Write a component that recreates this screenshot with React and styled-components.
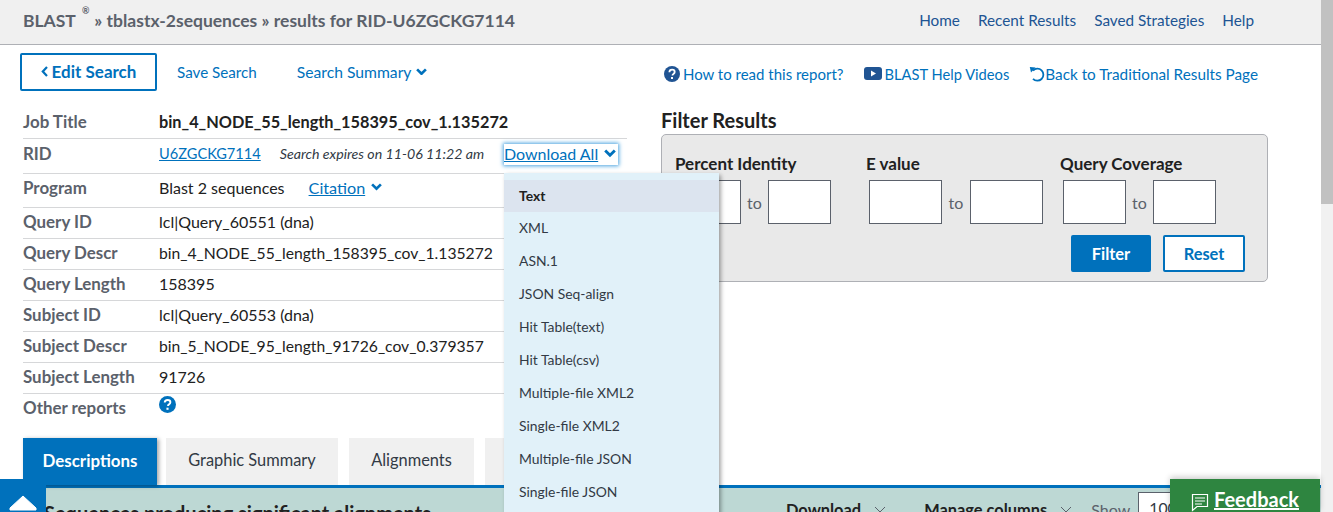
import React from "react";
import styled, { createGlobalStyle } from "styled-components";

const Global = createGlobalStyle`
  html, body { margin: 0; padding: 0; height: 512px; overflow: hidden; background: #fff; }
  body { font-family: Lato, "Open Sans", sans-serif; font-size: 16px; color: #212121; }
  a { color: #0071bc; text-decoration: none; }
`;

const Shell = styled.div`display: flex; width: 1333px; height: 512px; overflow: hidden; position: relative;`;
const Main = styled.div`width: 1321px; flex: none;`;
const ScrollTrack = styled.div`width: 12px; flex: none; background: #f1f1f1;`;
const ScrollThumb = styled.div`height: 204px; background: #c1c1c1;`;

const Header = styled.header`
  height: 45px; box-sizing: border-box; background: #f0f0f0; border-bottom: 1px solid #aeb0b5;
  display: flex; justify-content: space-between; align-items: center;
  padding: 0 67px 4px 23px;
`;
const Crumbs = styled.div`font-size: 17.5px; font-weight: 700; color: #5b616b; display: flex;`;
const Reg = styled.sup`font-size: 9px; margin: -4px 5px 0 6px; line-height: 1;`;
const TopNav = styled.nav`display: flex; gap: 18px; font-size: 15.3px; a { color: #205493; }`;

const Toolbar = styled.div`
  display: flex; align-items: center; justify-content: space-between;
  padding: 8px 63px 0 20px; height: 37px;
`;
const ToolLeft = styled.div`display: flex; align-items: center;`;
const ToolRight = styled.div`display: flex; align-items: center; gap: 20px; padding-top: 4px;`;
const EditBtn = styled.a`
  width: 137px; height: 38px; box-sizing: border-box; border: 2px solid #0071bc; border-radius: 2px;
  display: flex; align-items: center; justify-content: center; gap: 4px;
  font-weight: 700; font-size: 17px; color: #0071bc;
`;
const ToolLink = styled.a`font-size: ${p => p.$fs}px; color: #0071bc; margin-left: ${p => p.$ml}px; display: inline-flex; align-items: center; gap: 5px;`;
const IconLink = styled.a`display: inline-flex; align-items: center; gap: ${p => p.$gap}px; color: #0071bc; font-size: ${p => p.$fs}px;`;

const Columns = styled.div`display: flex; padding: 15px 0 0 23px;`;
const Meta = styled.div`width: 604px; flex: none;`;
const Row = styled.div`
  display: flex; align-items: center; height: ${p => p.$h}px; box-sizing: border-box;
  padding-bottom: ${p => p.$pb || 0}px;
  border-bottom: ${p => (p.$last ? "none" : "1px solid #d6d7d9")};
  font-size: ${p => p.$fs || 16}px;
`;
const Label = styled.div`width: 136px; flex: none; font-weight: 700; color: #5b616b; font-size: 16.9px;`;
const Strong = styled.span`font-weight: 700; font-size: 16.3px;`;
const Under = styled.a`text-decoration: underline; color: #0071bc; font-size: ${p => p.$fs}px;`;
const Expires = styled.em`font-size: 14.2px; color: #323a45; margin-left: 19px;`;
const DownloadAll = styled.span`
  position: absolute; left: 504px; top: 144px; height: 21px; padding: 0 2px 2px 0; width: 114px; box-sizing: border-box;
  display: flex; align-items: center; justify-content: space-between; background: #fff;
  box-shadow: 0 0 4px 1px #4aa3df;
`;
const CitationWrap = styled.span`margin-left: 24px; display: inline-flex; align-items: center; gap: 6px;`;
const ReportsHelp = styled.span`display: flex; margin-top: -7px;`;

const FilterCol = styled.section`margin-left: 34px; width: 607px;`;
const FilterTitle = styled.h2`margin: 3px 0 1px; font-size: 20px; font-weight: 700; line-height: 25px; color: #212121;`;
const FilterBox = styled.div`
  height: 148px; box-sizing: border-box; background: #e9e9e9; border: 1px solid #aeb0b5; border-radius: 5px;
  padding: 19px 22px 0 13px;
`;
const Groups = styled.div`display: flex;`;
const Group = styled.div`width: ${p => p.$w}px; flex: none;`;
const GroupLabel = styled.div`font-weight: 700; font-size: 17px; line-height: 20px; margin-bottom: 6px;`;
const Pair = styled.div`display: flex; align-items: center; padding-left: 3px; color: #5b616b;`;
const To = styled.span`width: ${p => p.$w}px; text-align: center; font-size: 16px; flex: none;`;
const Num = styled.div`width: ${p => p.$w}px; height: 44px; box-sizing: border-box; background: #fff; border: 1px solid #5b616b;`;
const Actions = styled.div`display: flex; justify-content: flex-end; gap: 12px; margin-top: 11px;`;
const Btn = styled.a`
  height: 37px; width: ${p => p.$w}px; box-sizing: border-box; display: flex; align-items: center; justify-content: center;
  font-weight: 700; font-size: 16.4px; border-radius: 2px; border: 2px solid #0071bc;
  background: ${p => (p.$solid ? "#0071bc" : "#fff")}; color: ${p => (p.$solid ? "#fff" : "#0071bc")};
`;

const Tabs = styled.div`display: flex; gap: 11px; padding: 13px 0 0 23px; height: 47px;`;
const Tab = styled.div`
  width: ${p => p.$w}px; height: 47px; box-sizing: border-box; display: flex; align-items: center; justify-content: center;
  margin-left: ${p => p.$ml || 0}px; padding-bottom: ${p => (p.$on ? 2 : 5)}px;
  background: ${p => (p.$on ? "#0071bc" : "#f0f0f0")}; color: ${p => (p.$on ? "#fff" : "#323a45")};
  font-weight: ${p => (p.$on ? 700 : 400)}; font-size: ${p => (p.$on ? 16.9 : 16.4)}px;
  box-shadow: ${p => (p.$on ? "2px 1px 4px rgba(0,0,0,.35)" : "none")};
`;
const Band = styled.div`
  margin-left: 23px; border-top: 3px solid #0071bc; height: 40px; box-sizing: border-box; background: #bdd8d4;
  padding: 14px 0 0 21px; font-weight: 700; color: #212121; font-size: 20px; white-space: nowrap; line-height: 22px;
`;
const BandTools = styled.div`
  position: absolute; left: 786px; top: 498px; display: flex; align-items: center; font-size: 16.4px; font-weight: 700; line-height: 20px;
`;
const BandTool = styled.span`display: inline-flex; align-items: center; gap: 13px; margin-right: ${p => p.$mr}px;`;
const Show = styled.span`font-weight: 400; color: #5b616b; margin-right: 8px; font-size: 16px;`;
const ShowBox = styled.span`width: 60px; height: 30px; margin-top: -6px; box-sizing: border-box; background: #fff; border: 1px solid #5b616b; font-weight: 400; padding: 5px 0 0 10px; color: #323a45; font-size: 15.8px;`;

const Menu = styled.ul`
  position: absolute; left: 504px; top: 173px; width: 215px; height: 345px; margin: 0; padding: 7px 0 0; list-style: none;
  background: #e1f1f9; box-shadow: 2px 2px 4px rgba(0,0,0,.35); font-size: 13.9px; color: #323a45;
`;
const MenuItem = styled.li`
  height: ${p => (p.$on ? 32 : 33)}px; display: flex; align-items: center; padding: 0 0 2px 15px; box-sizing: border-box;
  background: ${p => (p.$on ? "#dce4ef" : "transparent")}; font-weight: ${p => (p.$on ? 700 : 400)};
  color: ${p => (p.$on ? "#212121" : "#323a45")};
`;
const TopBtn = styled.a`
  position: absolute; left: 0; bottom: 0; width: 46px; height: 33px; background: #0071bc;
  display: flex; justify-content: center; align-items: flex-start; padding-top: 16px; box-sizing: border-box;
`;
const Feedback = styled.a`
  position: absolute; left: 1170px; bottom: 0; width: 150px; height: 33px; background: #2e8540; color: #fff;
  display: flex; align-items: flex-start; justify-content: center; gap: 4px; padding-top: 8px; box-sizing: border-box;
  font-weight: 700; font-size: 20px; line-height: 24px; box-shadow: 0 -2px 6px rgba(0,0,0,.2);
  span { text-decoration: underline; }
`;

const Chevron = ({ color = "#0071bc", size = 11 }) => (
  <svg width={size} height={size * 0.7} viewBox="0 0 10 7"><path d="M1 1.2l4 4 4-4" fill="none" stroke={color} strokeWidth="2.4" /></svg>
);
const ThinChevron = () => (
  <svg width="12" height="8" viewBox="0 0 12 8"><path d="M1 1l5 5 5-5" fill="none" stroke="#5b616b" strokeWidth="1" /></svg>
);
const Help = ({ color, size }) => (
  <svg width={size} height={size} viewBox="0 0 16 16">
    <circle cx="8" cy="8" r="8" fill={color} />
    <path d="M5.4 6.2c0-1.6 1.2-2.5 2.7-2.5s2.6.9 2.6 2.2c0 1-.6 1.5-1.3 2-.6.4-.9.7-.9 1.3v.3" fill="none" stroke="#fff" strokeWidth="1.8" />
    <rect x="7" y="11" width="2" height="2" fill="#fff" />
  </svg>
);
const Video = () => (
  <svg width="18" height="13" viewBox="0 0 18 13">
    <rect width="18" height="13" rx="3" fill="#205493" />
    <path d="M7 3.5l5 3-5 3z" fill="#fff" />
  </svg>
);
const Undo = () => (
  <svg width="16" height="16" viewBox="0 0 16 16">
    <path d="M4 4.6A6 6 0 1 1 4 12.8" fill="none" stroke="#0071bc" strokeWidth="1.8" />
    <path d="M.8 1l5.8.6-4.6 5z" fill="#0071bc" />
  </svg>
);
const Comment = () => (
  <svg width="19" height="20" viewBox="0 0 19 20" style={{ marginTop: 6 }}>
    <path d="M1.5 1.5h15v12H6l-4.5 4z" fill="none" stroke="#fff" strokeWidth="1.2" />
    <path d="M4 5h10M4 8h10M4 11h7" stroke="#fff" strokeWidth="1.1" />
  </svg>
);

const rows = [
  ["Query ID", "lcl|Query_60551 (dna)", 16],
  ["Query Descr", "bin_4_NODE_55_length_158395_cov_1.135272", 15.7],
  ["Query Length", "158395", 16],
  ["Subject ID", "lcl|Query_60553 (dna)", 16],
  ["Subject Descr", "bin_5_NODE_95_length_91726_cov_0.379357", 15.7],
  ["Subject Length", "91726", 16],
];
const items = ["Text", "XML", "ASN.1", "JSON Seq-align", "Hit Table(text)", "Hit Table(csv)", "Multiple-file XML2", "Single-file XML2", "Multiple-file JSON", "Single-file JSON", "Search Summary"];

export default function App() {
  return (
    <Shell>
      <Global />
      <Main>
        <Header>
          <Crumbs>BLAST<Reg>®</Reg>» tblastx-2sequences » results for RID-U6ZGCKG7114</Crumbs>
          <TopNav><a>Home</a><a>Recent Results</a><a>Saved Strategies</a><a>Help</a></TopNav>
        </Header>
        <Toolbar>
          <ToolLeft>
            <EditBtn>
              <svg width="7" height="11" viewBox="0 0 7 11"><path d="M6 1L1.8 5.5 6 10" fill="none" stroke="#0071bc" strokeWidth="2.2" /></svg>
              Edit Search
            </EditBtn>
            <ToolLink $ml={20} $fs={15.2}>Save Search</ToolLink>
            <ToolLink $ml={40} $fs={15.7}>Search Summary <Chevron /></ToolLink>
          </ToolLeft>
          <ToolRight>
            <IconLink $gap={3} $fs={15}><Help color="#205493" size={16} /> How to read this report?</IconLink>
            <IconLink $gap={3} $fs={14.7}><Video /> BLAST Help Videos</IconLink>
            <IconLink $gap={0} $fs={15.3}><Undo />Back to Traditional Results Page</IconLink>
          </ToolRight>
        </Toolbar>
        <Columns>
          <Meta>
            <Row $h={34}><Label>Job Title</Label><Strong>bin_4_NODE_55_length_158395_cov_1.135272</Strong></Row>
            <Row $h={35} $pb={5}><Label>RID</Label><Under $fs={14.6}>U6ZGCKG7114</Under><Expires>Search expires on 11-06 11:22 am</Expires></Row>
            <Row $h={34} $pb={7}><Label>Program</Label>Blast 2 sequences<CitationWrap><Under $fs={16.2}>Citation</Under><Chevron /></CitationWrap></Row>
            {rows.map(([k, v, fs]) => (<Row $h={31} $pb={3} $fs={fs} key={k}><Label>{k}</Label>{v}</Row>))}
            <Row $h={31} $pb={4} $last><Label>Other reports</Label><ReportsHelp><Help color="#0071bc" size={17} /></ReportsHelp></Row>
          </Meta>
          <FilterCol>
            <FilterTitle>Filter Results</FilterTitle>
            <FilterBox>
              <Groups>
                <Group $w={191}>
                  <GroupLabel>Percent Identity</GroupLabel>
                  <Pair><Num $w={63} /><To $w={27}>to</To><Num $w={63} /></Pair>
                </Group>
                <Group $w={194}>
                  <GroupLabel>E value</GroupLabel>
                  <Pair><Num $w={73} /><To $w={28}>to</To><Num $w={73} /></Pair>
                </Group>
                <Group $w={170}>
                  <GroupLabel>Query Coverage</GroupLabel>
                  <Pair><Num $w={63} /><To $w={27}>to</To><Num $w={63} /></Pair>
                </Group>
              </Groups>
              <Actions>
                <Btn $solid $w={80}>Filter</Btn>
                <Btn $w={82}>Reset</Btn>
              </Actions>
            </FilterBox>
          </FilterCol>
        </Columns>
        <Tabs>
          <Tab $on $w={134}>Descriptions</Tab>
          <Tab $w={172} $ml={-2}>Graphic Summary</Tab>
          <Tab $w={125}>Alignments</Tab>
          <Tab $w={110} />
        </Tabs>
        <Band>Sequences producing significant alignments</Band>
      </Main>
      <ScrollTrack><ScrollThumb /></ScrollTrack>

      <DownloadAll><Under $fs={16}>Download All</Under><Chevron size={12} /></DownloadAll>
      <Menu>{items.map((t, i) => <MenuItem key={t} $on={i === 0}>{t}</MenuItem>)}</Menu>
      <BandTools>
        <BandTool $mr={38}>Download <ThinChevron /></BandTool>
        <BandTool $mr={19}>Manage columns <ThinChevron /></BandTool>
        <Show>Show</Show>
        <ShowBox>100</ShowBox>
      </BandTools>
      <TopBtn><svg width="28" height="17" viewBox="0 0 28 17"><path d="M14 1l13 12v2H1v-2z" fill="#fff" stroke="#fff" strokeLinejoin="round" /></svg></TopBtn>
      <Feedback><Comment /><span>Feedback</span></Feedback>
    </Shell>
  );
}
